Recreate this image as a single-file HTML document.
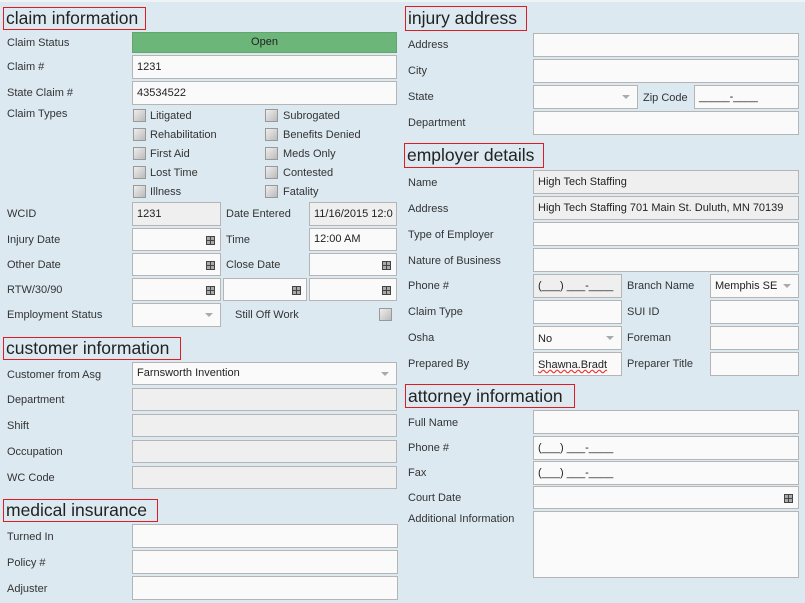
<!DOCTYPE html>
<html><head><style>
*{margin:0;padding:0;box-sizing:border-box}
body{width:805px;height:603px;background:#dce9f1;font-family:"Liberation Sans",sans-serif;font-size:11px;color:#333;position:relative;overflow:hidden}
.top{position:absolute;left:0;top:0;width:805px;height:2px;background:#eef3f6}
div{position:absolute}
.h{border:1px solid #e01b24;font-size:17.5px;color:#222;padding:0 2px;line-height:20px;white-space:nowrap}
.l{white-space:nowrap;color:#333;margin-top:1px}
.i{background:#fafafa;border:1px solid #b5b5b5;padding-left:4px;color:#222;white-space:nowrap;overflow:hidden}
.g{background:#efefef}
.cb{width:13px;height:13px;border:1px solid #999;background:linear-gradient(135deg,#eee,#bbb)}
.cal{right:5px;top:50%;margin-top:-4px;width:9px;height:9px;background:
linear-gradient(#444,#444) 0 0/9px 1px no-repeat,linear-gradient(#444,#444) 0 4px/9px 1px no-repeat,linear-gradient(#444,#444) 0 8px/9px 1px no-repeat,
linear-gradient(#444,#444) 0 0/1px 9px no-repeat,linear-gradient(#444,#444) 4px 0/1px 9px no-repeat,linear-gradient(#444,#444) 8px 0/1px 9px no-repeat,#aaa}
.dd{right:7px;top:50%;margin-top:-2px;width:0;height:0;border-left:4px solid transparent;border-right:4px solid transparent;border-top:4px solid #aaa}
</style></head><body>
<div class="top"></div>
<!-- LEFT -->
<div class="h" style="left:3px;top:7px;width:143px;height:23px">claim information</div>
<div class="l" style="left:7px;top:36px">Claim Status</div>
<div style="left:132px;top:32px;width:265px;height:21px;background:#6db67a;border:1px solid #62a56e;text-align:center;line-height:19px;color:#222">Open</div>
<div class="l" style="left:7px;top:60px">Claim #</div>
<div class="i" style="left:132px;top:55px;width:265px;height:24px;line-height:22px">1231</div>
<div class="l" style="left:7px;top:86px">State Claim #</div>
<div class="i" style="left:132px;top:81px;width:265px;height:24px;line-height:22px">43534522</div>
<div class="l" style="left:7px;top:107px">Claim Types</div>
<div class="cb" style="left:133px;top:109px"></div><div class="l" style="left:150px;top:109px">Litigated</div>
<div class="cb" style="left:133px;top:128px"></div><div class="l" style="left:150px;top:128px">Rehabilitation</div>
<div class="cb" style="left:133px;top:147px"></div><div class="l" style="left:150px;top:147px">First Aid</div>
<div class="cb" style="left:133px;top:166px"></div><div class="l" style="left:150px;top:166px">Lost Time</div>
<div class="cb" style="left:133px;top:185px"></div><div class="l" style="left:150px;top:185px">Illness</div>
<div class="cb" style="left:265px;top:109px"></div><div class="l" style="left:283px;top:109px">Subrogated</div>
<div class="cb" style="left:265px;top:128px"></div><div class="l" style="left:283px;top:128px">Benefits Denied</div>
<div class="cb" style="left:265px;top:147px"></div><div class="l" style="left:283px;top:147px">Meds Only</div>
<div class="cb" style="left:265px;top:166px"></div><div class="l" style="left:283px;top:166px">Contested</div>
<div class="cb" style="left:265px;top:185px"></div><div class="l" style="left:283px;top:185px">Fatality</div>

<div class="l" style="left:7px;top:207px">WCID</div>
<div class="i g" style="left:132px;top:202px;width:89px;height:24px;line-height:22px">1231</div>
<div class="l" style="left:226px;top:207px">Date Entered</div>
<div class="i g" style="left:309px;top:202px;width:88px;height:24px;line-height:22px">11/16/2015 12:0</div>
<div class="l" style="left:7px;top:233px">Injury Date</div>
<div class="i" style="left:132px;top:228px;width:89px;height:23px"><div class="cal"></div></div>
<div class="l" style="left:226px;top:233px">Time</div>
<div class="i" style="left:309px;top:228px;width:88px;height:23px;line-height:21px">12:00 AM</div>
<div class="l" style="left:7px;top:258px">Other Date</div>
<div class="i" style="left:132px;top:253px;width:89px;height:23px"><div class="cal"></div></div>
<div class="l" style="left:226px;top:258px">Close Date</div>
<div class="i" style="left:309px;top:253px;width:88px;height:23px"><div class="cal"></div></div>
<div class="l" style="left:7px;top:283px">RTW/30/90</div>
<div class="i" style="left:132px;top:278px;width:89px;height:23px"><div class="cal"></div></div>
<div class="i" style="left:223px;top:278px;width:84px;height:23px"><div class="cal"></div></div>
<div class="i" style="left:309px;top:278px;width:88px;height:23px"><div class="cal"></div></div>
<div class="l" style="left:7px;top:308px">Employment Status</div>
<div class="i" style="left:132px;top:303px;width:89px;height:24px"><div class="dd"></div></div>
<div class="l" style="left:235px;top:308px">Still Off Work</div>
<div class="cb" style="left:379px;top:308px"></div>

<div class="h" style="left:3px;top:337px;width:178px;height:23px">customer information</div>
<div class="l" style="left:7px;top:368px">Customer from Asg</div>
<div class="i" style="left:132px;top:362px;width:265px;height:23px;line-height:21px">Farnsworth Invention<div class="dd"></div></div>
<div class="l" style="left:7px;top:393px">Department</div>
<div class="i g" style="left:132px;top:388px;width:265px;height:23px"></div>
<div class="l" style="left:7px;top:419px">Shift</div>
<div class="i g" style="left:132px;top:414px;width:265px;height:23px"></div>
<div class="l" style="left:7px;top:445px">Occupation</div>
<div class="i g" style="left:132px;top:440px;width:265px;height:23px"></div>
<div class="l" style="left:7px;top:471px">WC Code</div>
<div class="i g" style="left:132px;top:466px;width:265px;height:23px"></div>

<div class="h" style="left:3px;top:499px;width:155px;height:23px">medical insurance</div>
<div class="l" style="left:7px;top:530px">Turned In</div>
<div class="i" style="left:132px;top:524px;width:266px;height:24px"></div>
<div class="l" style="left:7px;top:556px">Policy #</div>
<div class="i" style="left:132px;top:550px;width:266px;height:24px"></div>
<div class="l" style="left:7px;top:582px">Adjuster</div>
<div class="i" style="left:132px;top:576px;width:266px;height:24px"></div>

<!-- RIGHT -->
<div class="h" style="left:405px;top:6px;width:122px;height:25px;line-height:23px">injury address</div>
<div class="l" style="left:408px;top:38px">Address</div>
<div class="i" style="left:533px;top:33px;width:266px;height:24px"></div>
<div class="l" style="left:408px;top:64px">City</div>
<div class="i" style="left:533px;top:59px;width:266px;height:24px"></div>
<div class="l" style="left:408px;top:90px">State</div>
<div class="i" style="left:533px;top:85px;width:105px;height:24px"><div class="dd"></div></div>
<div class="l" style="left:643px;top:91px">Zip Code</div>
<div class="i" style="left:694px;top:85px;width:105px;height:24px;line-height:22px">_____-____</div>
<div class="l" style="left:408px;top:116px">Department</div>
<div class="i" style="left:533px;top:111px;width:266px;height:24px"></div>

<div class="h" style="left:404px;top:143px;width:140px;height:25px;line-height:23px">employer details</div>
<div class="l" style="left:408px;top:176px">Name</div>
<div class="i g" style="left:533px;top:170px;width:266px;height:24px;line-height:22px">High Tech Staffing</div>
<div class="l" style="left:408px;top:202px">Address</div>
<div class="i g" style="left:533px;top:196px;width:266px;height:24px;line-height:22px">High Tech Staffing 701 Main St. Duluth, MN 70139</div>
<div class="l" style="left:408px;top:228px">Type of Employer</div>
<div class="i" style="left:533px;top:222px;width:266px;height:24px"></div>
<div class="l" style="left:408px;top:254px">Nature of Business</div>
<div class="i" style="left:533px;top:248px;width:266px;height:24px"></div>
<div class="l" style="left:408px;top:279px">Phone #</div>
<div class="i g" style="left:533px;top:274px;width:89px;height:24px;line-height:22px">(___) ___-____</div>
<div class="l" style="left:627px;top:279px">Branch Name</div>
<div class="i" style="left:710px;top:274px;width:89px;height:24px;line-height:22px">Memphis SE<div class="dd"></div></div>
<div class="l" style="left:408px;top:305px">Claim Type</div>
<div class="i" style="left:533px;top:300px;width:89px;height:24px"></div>
<div class="l" style="left:627px;top:305px">SUI ID</div>
<div class="i" style="left:710px;top:300px;width:89px;height:24px"></div>
<div class="l" style="left:408px;top:331px">Osha</div>
<div class="i" style="left:533px;top:326px;width:89px;height:24px;line-height:24px">No<div class="dd"></div></div>
<div class="l" style="left:627px;top:331px">Foreman</div>
<div class="i" style="left:710px;top:326px;width:89px;height:24px"></div>
<div class="l" style="left:408px;top:357px">Prepared By</div>
<div class="i" style="left:533px;top:352px;width:89px;height:24px;line-height:24px"><span style="text-decoration:underline wavy #e33">Shawna.Bradt</span></div>
<div class="l" style="left:627px;top:357px">Preparer Title</div>
<div class="i" style="left:710px;top:352px;width:89px;height:24px"></div>

<div class="h" style="left:405px;top:384px;width:170px;height:24px;line-height:22px">attorney information</div>
<div class="l" style="left:408px;top:416px">Full Name</div>
<div class="i" style="left:533px;top:410px;width:266px;height:24px"></div>
<div class="l" style="left:408px;top:441px">Phone #</div>
<div class="i" style="left:533px;top:436px;width:266px;height:24px;line-height:22px">(___) ___-____</div>
<div class="l" style="left:408px;top:466px">Fax</div>
<div class="i" style="left:533px;top:461px;width:266px;height:24px;line-height:22px">(___) ___-____</div>
<div class="l" style="left:408px;top:491px">Court Date</div>
<div class="i" style="left:533px;top:486px;width:266px;height:23px"><div class="cal"></div></div>
<div class="l" style="left:408px;top:512px">Additional Information</div>
<div class="i" style="left:533px;top:511px;width:266px;height:67px"></div>
</body></html>
